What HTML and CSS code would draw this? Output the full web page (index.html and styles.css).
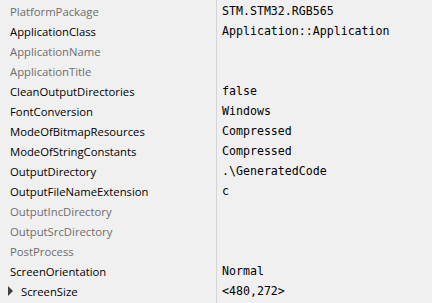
FILE: index.html
```html
<!DOCTYPE html>
<html>
<head>
<meta charset="utf-8">
<link rel="stylesheet" href="styles.css">
</head>
<body>
<div class="grid">
  <div class="row"><div class="name dim">PlatformPackage</div><div class="val">STM.STM32.RGB565</div></div>
  <div class="row"><div class="name">ApplicationClass</div><div class="val">Application::Application</div></div>
  <div class="row"><div class="name dim">ApplicationName</div><div class="val"></div></div>
  <div class="row"><div class="name dim">ApplicationTitle</div><div class="val"></div></div>
  <div class="row"><div class="name">CleanOutputDirectories</div><div class="val">false</div></div>
  <div class="row"><div class="name">FontConversion</div><div class="val">Windows</div></div>
  <div class="row"><div class="name">ModeOfBitmapResources</div><div class="val">Compressed</div></div>
  <div class="row"><div class="name">ModeOfStringConstants</div><div class="val">Compressed</div></div>
  <div class="row"><div class="name">OutputDirectory</div><div class="val">.\GeneratedCode</div></div>
  <div class="row"><div class="name">OutputFileNameExtension</div><div class="val">c</div></div>
  <div class="row"><div class="name dim">OutputIncDirectory</div><div class="val"></div></div>
  <div class="row"><div class="name dim">OutputSrcDirectory</div><div class="val"></div></div>
  <div class="row"><div class="name dim">PostProcess</div><div class="val"></div></div>
  <div class="row"><div class="name">ScreenOrientation</div><div class="val">Normal</div></div>
  <div class="row"><div class="name expander"><span class="arrow"></span>ScreenSize</div><div class="val">&lt;480,272&gt;</div></div>
</div>
</body>
</html>
```
FILE: styles.css
```css
html, body {
  margin: 0;
  padding: 0;
  background: #f0f0f0;
  height: 100%;
  overflow: hidden;
}
.grid {
  display: flex;
  flex-direction: column;
  height: 303px;
  box-sizing: border-box;
  padding-top: 1px;
  background: linear-gradient(to right, transparent 216px, #d4d4d4 216px, #d4d4d4 217px, transparent 217px);
}
.row {
  display: flex;
  flex: none;
  height: 20px;
  align-items: center;
}
.name {
  width: 216px;
  box-sizing: border-box;
  padding-left: 10px;
  font-family: "Open Sans", "Noto Sans", sans-serif;
  font-size: 11.3px;
  color: #000;
  white-space: nowrap;
}
.name.dim {
  color: #6d6d6d;
}
.name.expander {
  display: flex;
  align-items: center;
  padding-left: 8px;
}
.arrow {
  width: 0;
  height: 0;
  border-top: 5px solid transparent;
  border-bottom: 5px solid transparent;
  border-left: 5px solid #404040;
  margin-right: 8px;
}
.val {
  padding-left: 5px;
  margin-left: 1px;
  font-family: "DejaVu Sans Mono", "Liberation Mono", monospace;
  font-size: 11.6px;
  color: #000;
  white-space: nowrap;
}
```
